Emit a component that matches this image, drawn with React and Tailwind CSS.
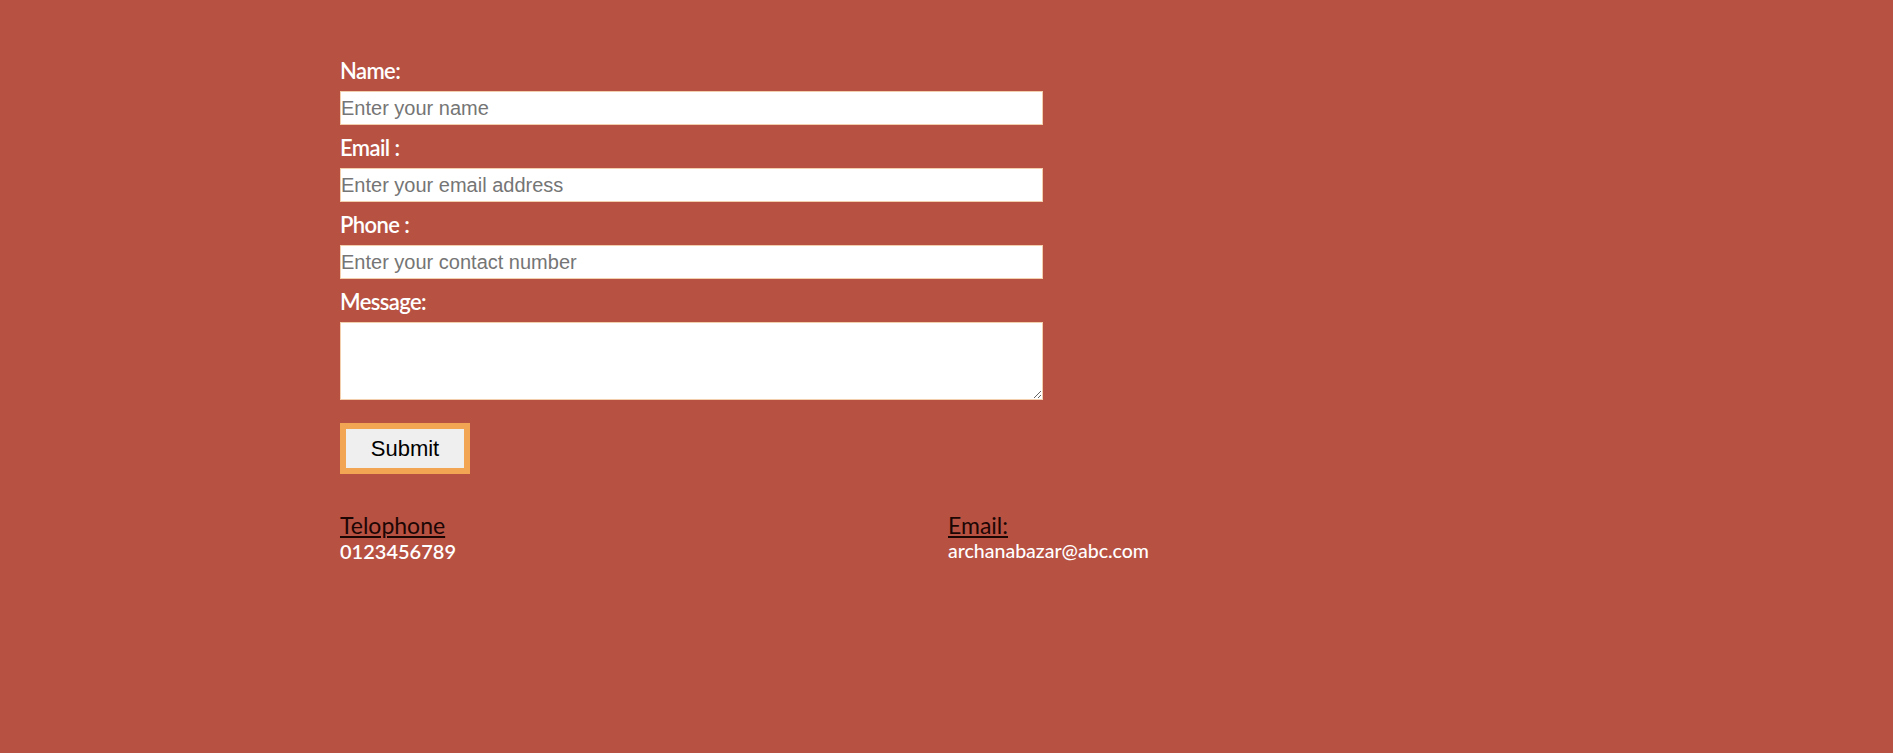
import React, { useState } from 'react';

const Field = ({ label, children }) => (
    <div className="flex flex-col">
        <label className="text-[22px] leading-[24px] text-white font-semibold tracking-[-0.6px] mb-[8px]">{label}</label>
        {children}
    </div>
);

export default function App() {
    const [form, setForm] = useState({ name: "", email: "", phone: "", message: "" });

    const update = (key) => (e) => setForm({ ...form, [key]: e.target.value });

    const inputClass =
        "w-full h-[34px] bg-white border border-[#f3cfae] px-0 text-[20px] text-black placeholder:text-[#757575] outline-none font-['Liberation_Sans',Arial,sans-serif]";

    return (
        <div className="min-h-screen w-full bg-[#b75142] font-['Lato','Noto_Sans',sans-serif]">
            <div className="pl-[340px] pt-[59px]">
                <form className="w-[703px] flex flex-col gap-[11px]" onSubmit={(e) => e.preventDefault()}>
                    <Field label="Name:">
                        <input className={inputClass} placeholder="Enter your name" value={form.name} onChange={update("name")} />
                    </Field>
                    <Field label="Email :">
                        <input className={inputClass} placeholder="Enter your email address" value={form.email} onChange={update("email")} />
                    </Field>
                    <Field label="Phone :">
                        <input className={inputClass} placeholder="Enter your contact number" value={form.phone} onChange={update("phone")} />
                    </Field>
                    <Field label="Message:">
                        <textarea
                            className="w-full h-[78px] bg-white border border-[#f3cfae] outline-none resize"
                            value={form.message}
                            onChange={update("message")}
                        />
                    </Field>
                    <div className="pt-[12px]">
                        <button
                            type="submit"
                            className="w-[130px] h-[51px] bg-[#efefef] border-[6px] border-[#f2a654] text-[22px] text-black font-['Liberation_Sans',Arial,sans-serif]"
                        >
                            Submit
                        </button>
                    </div>
                </form>

                <div className="grid grid-cols-[608px_1fr] mt-[37px]">
                    <div className="flex flex-col">
                        <span className="text-[23px] leading-[28px] text-[#1c0604] underline">Telophone</span>
                        <span className="text-[20px] leading-[24px] text-white font-semibold">0123456789</span>
                    </div>
                    <div className="flex flex-col">
                        <span className="text-[23px] leading-[28px] text-[#1c0604] underline">Email:</span>
                        <span className="text-[19.5px] leading-[24px] text-white font-medium">archanabazar@abc.com</span>
                    </div>
                </div>
            </div>
        </div>
    );
}
